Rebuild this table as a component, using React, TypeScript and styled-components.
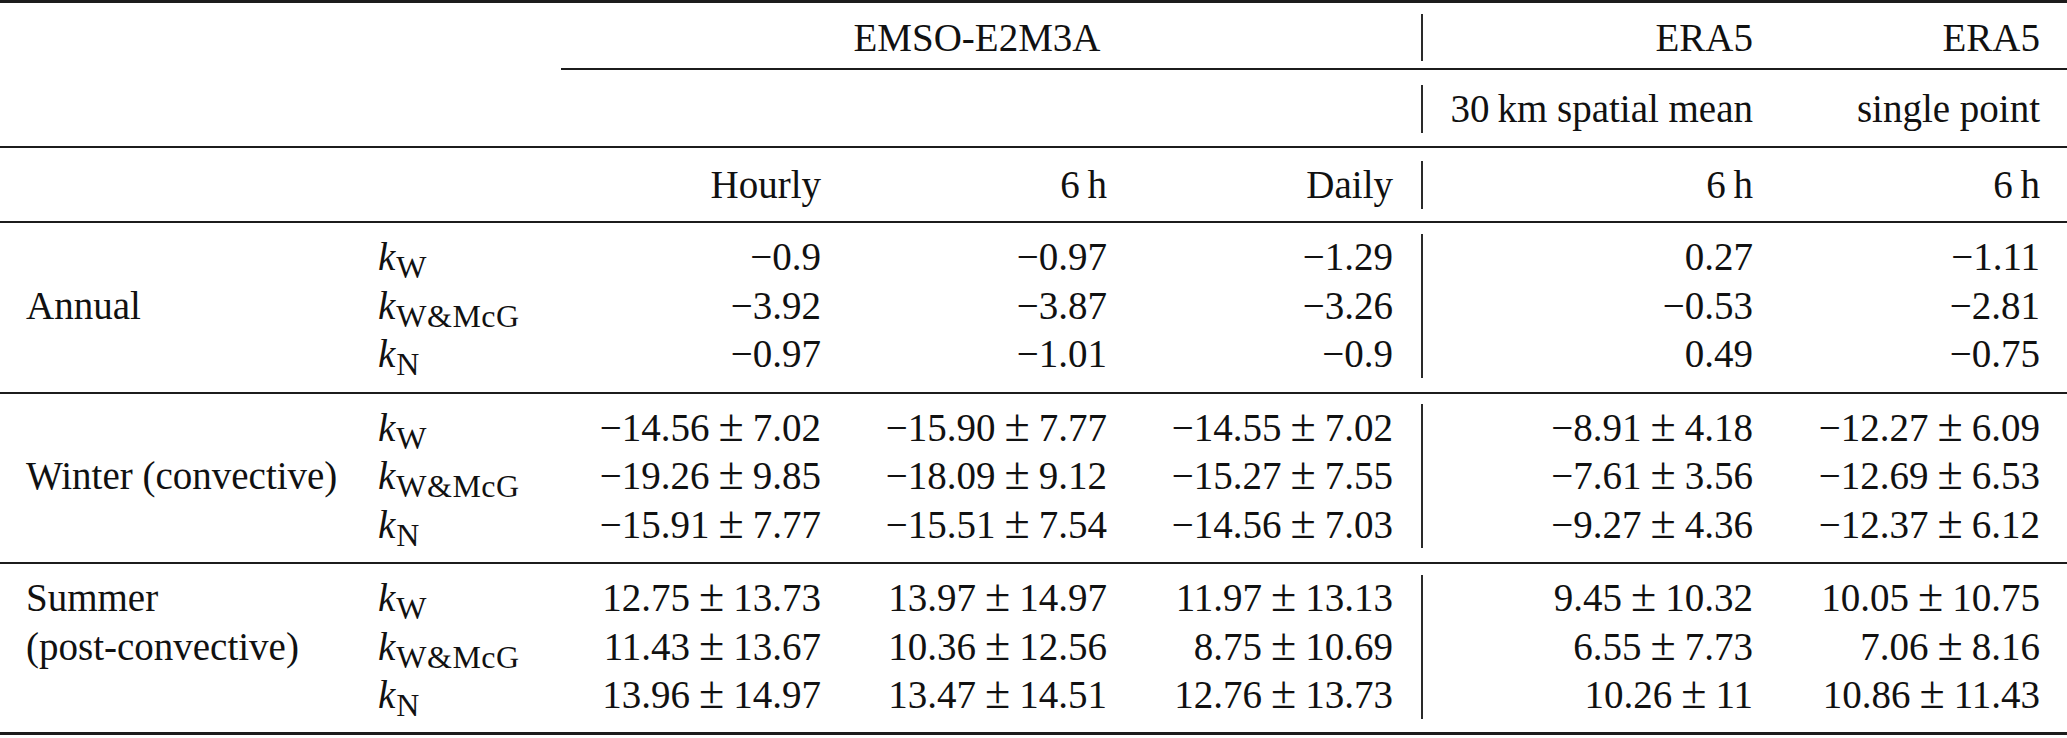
/**
 * Transfer coefficient table
 * EMSO-E2M3A mooring vs ERA5, annual and seasonal k values
 */

import React from 'react';
import styled, { createGlobalStyle } from 'styled-components';

const GlobalStyle = createGlobalStyle`
  html, body {
    margin: 0;
    padding: 0;
    background: #ffffff;
  }
  body {
    font-family: 'Liberation Serif', 'Times New Roman', serif;
    color: #111;
  }
`;

// label | coefficient | hourly | 6h | daily | divider | era5 mean | era5 point | pad
const COLUMNS = '378px 183px 260px 286px 286px 58px 302px 287px 27px';
const RULE = '#1c1c1c';

const Table = styled.div`
  width: 2067px;
  border-top: 3px solid ${RULE};
  border-bottom: 3px solid ${RULE};
  font-family: 'Liberation Serif', 'Times New Roman', serif;
  font-size: 39px;
  line-height: 48px;
`;

const HeadRow = styled.div<{ $h: number; $rule?: boolean; $pad?: number }>`
  display: grid;
  grid-template-columns: ${COLUMNS};
  grid-template-rows: 100%;
  height: ${(p) => p.$h}px;
  box-sizing: border-box;
  padding-top: ${(p) => p.$pad ?? 0}px;
  border-bottom: ${(p) => (p.$rule ? `2px solid ${RULE}` : 'none')};
`;

const Cell = styled.div<{ $align?: 'left' | 'right' | 'center'; $span?: string }>`
  display: flex;
  align-items: center;
  justify-content: ${(p) =>
    p.$align === 'right' ? 'flex-end' : p.$align === 'center' ? 'center' : 'flex-start'};
  grid-column: ${(p) => p.$span ?? 'auto'};
  white-space: nowrap;
`;

const GroupHead = styled(Cell)`
  border-bottom: 2px solid ${RULE};
  padding-top: 4px;
`;

const GroupDivider = styled.div`
  grid-column: 6;
  grid-row: 1 / span 3;
  display: flex;
  align-items: center;
  justify-content: center;
`;

const Rule = styled.div<{ $len: number }>`
  width: 2px;
  height: ${(p) => p.$len}px;
  background: #2a2a2a;
`;

const Group = styled.div<{ $last?: boolean }>`
  display: grid;
  grid-template-columns: ${COLUMNS};
  grid-template-rows: repeat(3, 48.5px);
  padding: 10px 0 ${(p) => (p.$last ? 12 : 13)}px;
  border-bottom: ${(p) => (p.$last ? 'none' : `2px solid ${RULE}`)};
`;

const SeasonLine = styled.div<{ $row: number }>`
  grid-column: 1;
  grid-row: ${(p) => p.$row};
  display: flex;
  align-items: center;
  padding-left: 26px;
  white-space: nowrap;
`;

const Coef = styled.div<{ $row: number }>`
  grid-column: 2;
  grid-row: ${(p) => p.$row};
  display: flex;
  align-items: center;
  white-space: nowrap;
`;

const Symbol = styled.span`
  display: inline-block;
  line-height: 48px;
`;

const Italic = styled.span`
  font-style: italic;
  margin-right: 1px;
`;

const Sub = styled.span`
  font-size: 32px;
  letter-spacing: 0.5px;
  vertical-align: -8px;
  line-height: 0;
`;

const Value = styled.div<{ $col: number; $row: number }>`
  grid-column: ${(p) => p.$col};
  grid-row: ${(p) => p.$row};
  display: flex;
  align-items: center;
  justify-content: flex-end;
  white-space: nowrap;
`;

const Figure = styled.span`
  display: inline-block;
  line-height: 48px;
`;

const PlusMinus = styled.span`
  font-size: 46px;
  line-height: 0;
  margin: 0 9px;
`;

type Row = { coef: string; values: string[] };
type Season = { label: string[]; labelRow: number; rows: Row[] };

const seasons: Season[] = [
  {
    label: ['Annual'],
    labelRow: 2,
    rows: [
      { coef: 'W', values: ['−0.9', '−0.97', '−1.29', '0.27', '−1.11'] },
      { coef: 'W&McG', values: ['−3.92', '−3.87', '−3.26', '−0.53', '−2.81'] },
      { coef: 'N', values: ['−0.97', '−1.01', '−0.9', '0.49', '−0.75'] },
    ],
  },
  {
    label: ['Winter (convective)'],
    labelRow: 2,
    rows: [
      { coef: 'W', values: ['−14.56±7.02', '−15.90±7.77', '−14.55±7.02', '−8.91±4.18', '−12.27±6.09'] },
      { coef: 'W&McG', values: ['−19.26±9.85', '−18.09±9.12', '−15.27±7.55', '−7.61±3.56', '−12.69±6.53'] },
      { coef: 'N', values: ['−15.91±7.77', '−15.51±7.54', '−14.56±7.03', '−9.27±4.36', '−12.37±6.12'] },
    ],
  },
  {
    label: ['Summer', '(post-convective)'],
    labelRow: 1,
    rows: [
      { coef: 'W', values: ['12.75±13.73', '13.97±14.97', '11.97±13.13', '9.45±10.32', '10.05±10.75'] },
      { coef: 'W&McG', values: ['11.43±13.67', '10.36±12.56', '8.75±10.69', '6.55±7.73', '7.06±8.16'] },
      { coef: 'N', values: ['13.96±14.97', '13.47±14.51', '12.76±13.73', '10.26±11', '10.86±11.43'] },
    ],
  },
];

// data columns in the grid (divider sits at column 6)
const VALUE_COLUMNS = [3, 4, 5, 7, 8];

function Num({ text }: { text: string }) {
  const [mean, spread] = text.split('±');
  if (spread === undefined) return <Figure>{mean}</Figure>;
  return (
    <Figure>
      {mean}
      <PlusMinus>±</PlusMinus>
      {spread}
    </Figure>
  );
}

export default function App() {
  return (
    <>
      <GlobalStyle />
      <Table>
        <HeadRow $h={67}>
          <Cell $span="1 / 3" />
          <GroupHead $align="center" $span="3 / 6">EMSO-E2M3A</GroupHead>
          <GroupHead $align="center">
            <Rule $len={47} />
          </GroupHead>
          <GroupHead $align="right">ERA5</GroupHead>
          <GroupHead $align="right">ERA5</GroupHead>
          <GroupHead />
        </HeadRow>

        <HeadRow $h={78} $rule $pad={2}>
          <Cell $span="1 / 6" />
          <Cell $align="center">
            <Rule $len={48} />
          </Cell>
          <Cell $align="right">30{'\u2009'}km spatial mean</Cell>
          <Cell $align="right">single point</Cell>
        </HeadRow>

        <HeadRow $h={75} $rule>
          <Cell $span="1 / 3" />
          <Cell $align="right">Hourly</Cell>
          <Cell $align="right">6{'\u2009'}h</Cell>
          <Cell $align="right">Daily</Cell>
          <Cell $align="center">
            <Rule $len={48} />
          </Cell>
          <Cell $align="right">6{'\u2009'}h</Cell>
          <Cell $align="right">6{'\u2009'}h</Cell>
        </HeadRow>

        {seasons.map((season, si) => (
          <Group key={season.label.join(' ')} $last={si === seasons.length - 1}>
            {season.label.map((line, li) => (
              <SeasonLine key={line} $row={season.labelRow + li}>
                {line}
              </SeasonLine>
            ))}
            <GroupDivider>
              <Rule $len={144} />
            </GroupDivider>
            {season.rows.map((row, ri) => (
              <React.Fragment key={row.coef}>
                <Coef $row={ri + 1}>
                  <Symbol>
                    <Italic>k</Italic>
                    <Sub>{row.coef}</Sub>
                  </Symbol>
                </Coef>
                {row.values.map((v, vi) => (
                  <Value key={vi} $col={VALUE_COLUMNS[vi]} $row={ri + 1}>
                    <Num text={v} />
                  </Value>
                ))}
              </React.Fragment>
            ))}
          </Group>
        ))}
      </Table>
    </>
  );
}
